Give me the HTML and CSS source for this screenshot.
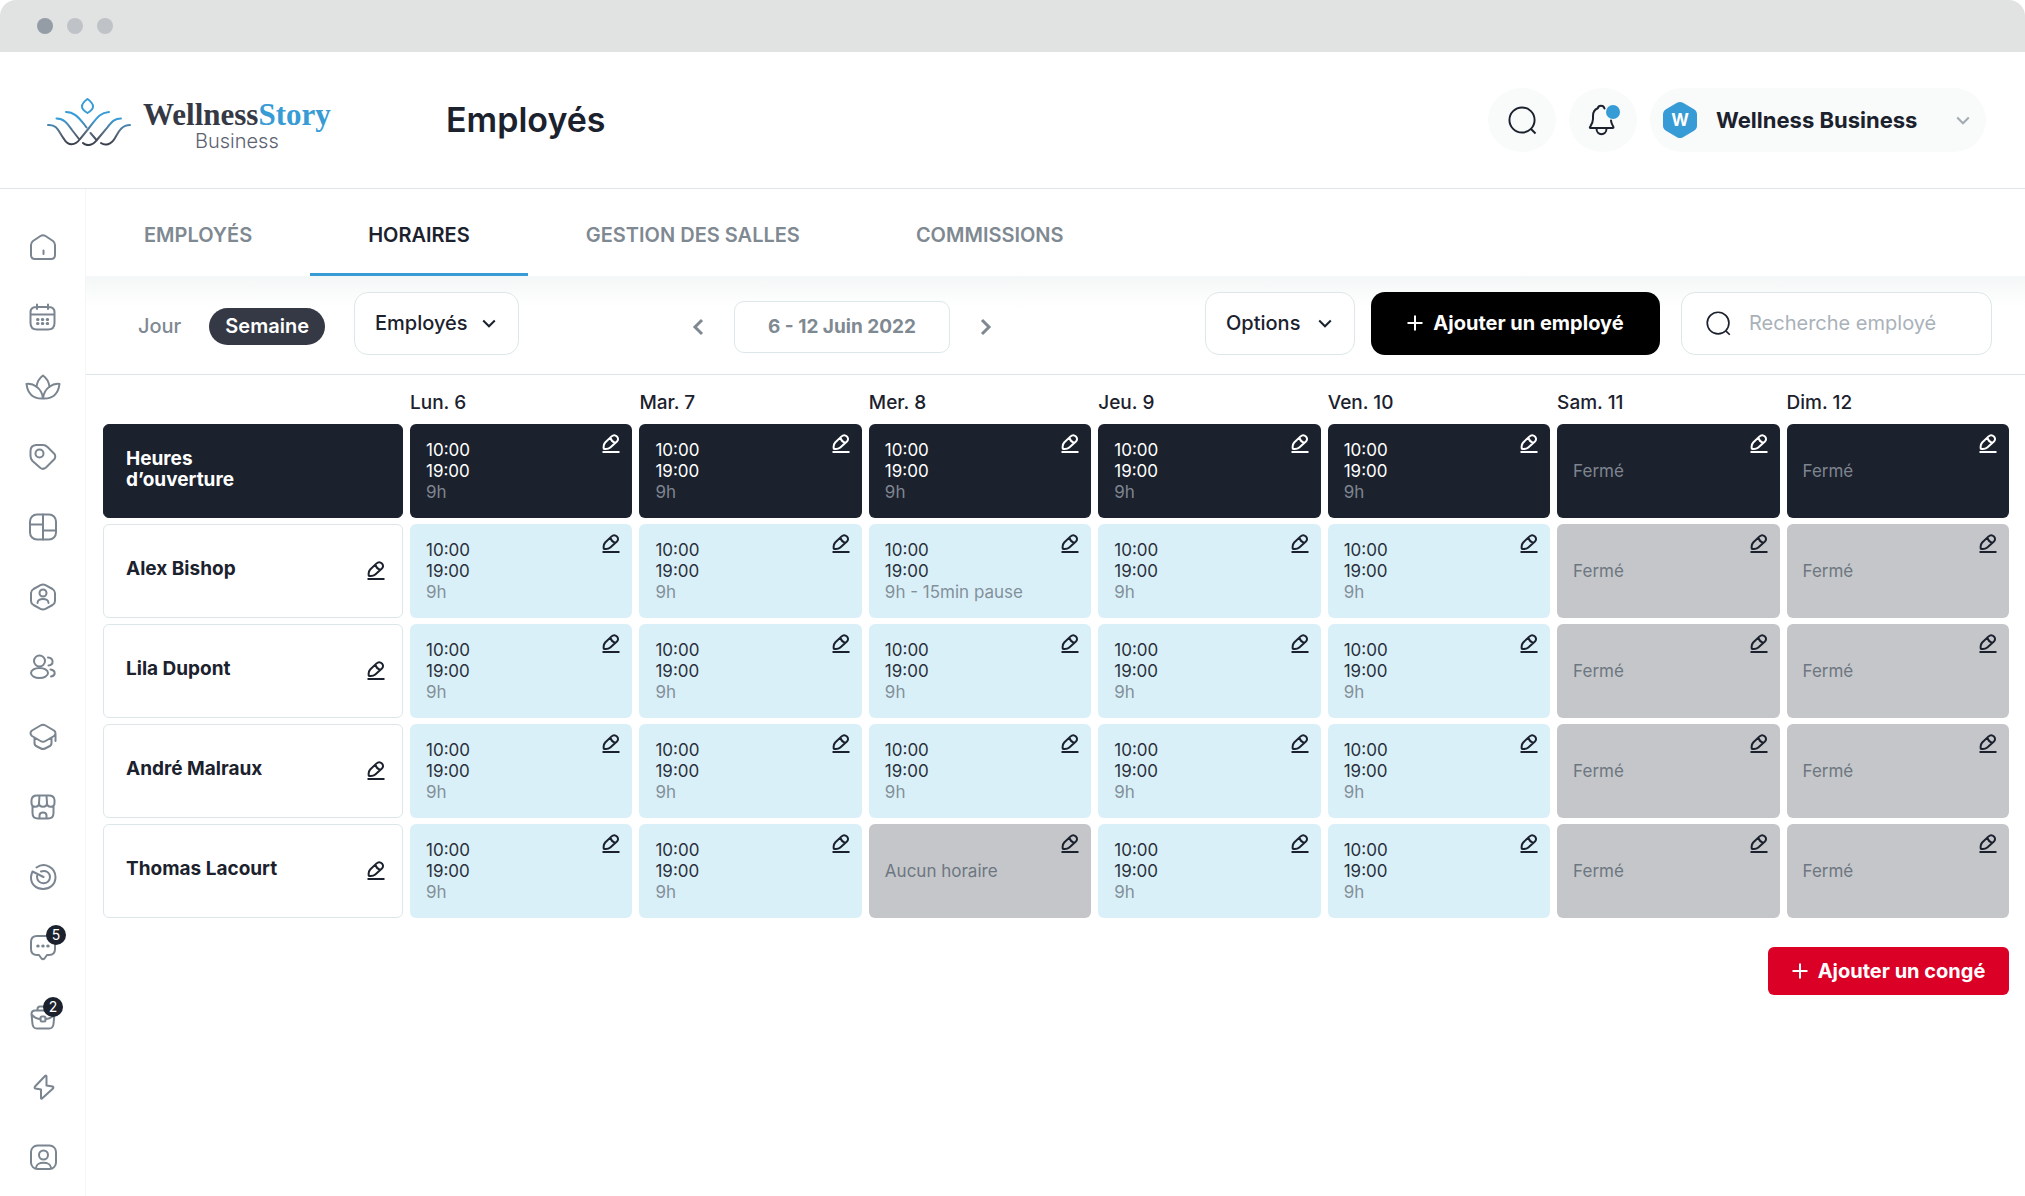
FILE: index.html
```html
<!DOCTYPE html>
<html lang="fr">
<head>
<meta charset="utf-8">
<meta name="viewport" content="width=device-width, initial-scale=1">
<title>Employés – Horaires</title>
<link rel="stylesheet" href="styles.css">
</head>
<body>
<svg class="sprite" aria-hidden="true">
  <symbol id="i-edit" viewBox="0 0 18 20"><path d="M1.800 14.800C1.200 11.500 1.800 10 3.200 8.500L9.300 2.600C11 1 13.400 1 14.900 2.400S16.400 6 14.900 7.500L8.300 13.400C6.600 14.900 4.800 15.300 1.800 14.800ZM8.700 4.200C9.200 6.300 10.600 7.900 12.800 8.600M0.500 18H17.500"/></symbol>
  <symbol id="i-search" viewBox="0 0 30 30"><circle cx="14.500" cy="14.500" r="13"/><path d="M23.500 23.500L28.500 28.500"/></symbol>
  <symbol id="i-chevron" viewBox="0 0 14 9"><path d="M1.200 1.500L7 7.300L12.800 1.500"/></symbol>
  <symbol id="i-plus" viewBox="0 0 16 16"><path d="M8 0.500V15.500M0.500 8H15.500"/></symbol>
</svg>

<div class="titlebar"><span class="dot dot-active"></span><span class="dot"></span><span class="dot"></span></div>

<header class="header">
  <a class="brand" href="#">
    <svg class="brand-mark" viewBox="0 0 84 48" aria-hidden="true">
      <defs><linearGradient id="mark" x1="0" y1="0" x2="0" y2="48" gradientUnits="userSpaceOnUse"><stop offset=".45" stop-color="#379bd5"/><stop offset=".72" stop-color="#5b6a7c"/><stop offset="1" stop-color="#353945"/></linearGradient></defs>
      <g fill="none" stroke="url(#mark)" stroke-width="2" stroke-linecap="round">
        <path d="M40.500 1C44 3.500 46 6 46 8.500S44 13 40.500 15C37 13 35 11 35 8.500S37 3.500 40.500 1Z"/>
        <path d="M1 27C11 26 12 35 17 41C21 48 28 48 33 41L42 30C50 20 52 15 62 14"/>
        <path d="M9.500 20.500C17 20.500 20 25 25 32L32 41M36 45C39 48 45 48 49 43L60 30C65 23 68 20.500 74 20.500"/>
        <path d="M19 14C27 14 31 19 37 26L39.500 29.500M43.500 35L49.500 42M54 45C58 48 64 47 68 40C72 33 75 27 83 27"/>
      </g>
    </svg>
    <span class="brand-text"><span class="brand-name">Wellness<span class="brand-accent">Story</span></span><span class="brand-sub">Business</span></span>
  </a>
  <h1 class="page-title">Employés</h1>
  <div class="header-actions">
    <button class="round-btn" type="button" aria-label="Rechercher"><svg class="ico-30"><use href="#i-search"/></svg></button>
    <button class="round-btn" type="button" aria-label="Notifications">
      <svg class="bell" viewBox="0 0 34 32" aria-hidden="true"><path d="M18.500 4.500C17.500 1 12.500 1 11.800 4.300C8.500 5.500 7 8.500 7 12V15C7 18.500 5.500 20.500 4 23C3.700 23.700 3.800 24 4.500 24H26.500C27.500 24 27.700 23.600 27.300 22.800C26 20.500 25 18.500 25 16.500M10.500 24.500C10.500 32 20.500 32 20.500 24.500"/><circle class="bell-dot" cx="27" cy="8" r="7"/></svg>
    </button>
    <div class="profile">
      <svg class="avatar" viewBox="0 0 36 38" aria-hidden="true"><path d="M15 1.800Q18 0 21 1.800L32 8.200Q35 10 35 13.500V24.500Q35 28 32 29.800L21 36.200Q18 38 15 36.200L4 29.800Q1 28 1 24.500V13.500Q1 10 4 8.200Z"/><text x="18" y="25" text-anchor="middle">W</text></svg>
      <select class="profile-select" aria-label="Compte"><option>Wellness Business</option></select>
      <svg class="chevron profile-chevron" aria-hidden="true"><use href="#i-chevron"/></svg>
    </div>
  </div>
</header>

<div class="shell">
  <nav class="sidebar" aria-label="Navigation principale">
    <a href="#" aria-label="Accueil"><svg class="nav-ico" viewBox="0 0 28 28"><path d="M2 12Q2 9.500 4 8L11.500 3Q14 1.500 16.500 3L24 8Q26 9.500 26 12V22Q26 26 22 26H6Q2 26 2 22ZM14.500 17.500V21"/></svg></a>
    <a href="#" aria-label="Calendrier"><svg class="nav-ico" viewBox="0 0 28 28"><path d="M1.500 11.500H25.500M8 1.500V6M19 1.500V6M7 4H20Q25.500 4 25.500 9.500V20Q25.500 26.500 19 26.500H8Q1.500 26.500 1.500 20V9.500Q1.500 4 7 4Z"/><path class="thick" d="M8.500 16.500H9M13.300 16.500H13.800M18.200 16.500H18.700M8.500 20.500H9M13.300 20.500H13.800M18.200 20.500H18.700"/></svg></a>
    <a href="#" aria-label="Soins"><svg class="nav-ico nav-wide" viewBox="0 0 36 26"><path d="M18 24.500C7 25 2.500 18 1.500 10C7.500 9 17 13.500 18 24.500C19 13.500 28.500 9 34.500 10C33.500 18 29 25 18 24.500M11.500 13C12 8 14.500 4 18 1.500C21.500 4 24 8 24.500 13"/></svg></a>
    <a href="#" aria-label="Offres"><svg class="nav-ico" viewBox="0 0 28 28"><path d="M1.500 8Q1.500 2.500 7 2H14Q16.500 2 18.500 4L25.500 11Q27 13.500 25.500 16L17 24.500Q14 27 11.500 25L3.500 18Q1.500 16 1.500 13Z"/><circle cx="10.500" cy="10.500" r="4"/></svg></a>
    <a href="#" aria-label="Tableau"><svg class="nav-ico" viewBox="0 0 28 28"><rect x="1" y="1.500" width="26" height="25" rx="7"/><path d="M14 1.500V26.500M1 11.500H14M14 17.500H27"/></svg></a>
    <a href="#" aria-label="Clients"><svg class="nav-ico" viewBox="0 0 28 28"><path d="M11.500 2.200Q14 1 16.500 2.200L23.500 6Q26 7.500 26 10V18Q26 20.500 23.500 22L16.500 25.800Q14 27 11.500 25.800L4.500 22Q2 20.500 2 18V10Q2 7.500 4.500 6Z"/><circle cx="14" cy="10" r="3.500"/><path d="M8.500 20C8.500 14.500 19.500 14.500 19.500 20"/></svg></a>
    <a href="#" aria-label="Équipe"><svg class="nav-ico" viewBox="0 0 28 28"><circle cx="10.500" cy="8" r="5.500"/><ellipse cx="10.500" cy="20" rx="8.500" ry="5"/><path d="M19 4.500C25 5 25 12 19.500 12.500M21.500 16.500C27 17.500 27 22.500 22 23.500"/></svg></a>
    <a href="#" aria-label="Formation"><svg class="nav-ico" viewBox="0 0 28 28"><path d="M11.500 2.500Q14 1 16.500 2.500L25 7.500Q28 10 25 13L16.500 18Q14 19.500 11.500 18L3 13Q0 10 3 7.500ZM5.500 15V20Q5.500 22.500 8 23.500L12 25.500Q14 26.500 16 25.500L20 23.500Q22.500 22.500 22.500 20V15M26.500 11V18"/></svg></a>
    <a href="#" aria-label="Boutique"><svg class="nav-ico" viewBox="0 0 28 28"><path d="M8 2.500H20Q25 2.500 25.500 7V10C25.500 15 18 15 18 10C18 15 10 15 10 10C10 15 2.500 15 2.500 10V7Q3 2.500 8 2.500ZM10.500 2.500L10 10M17.500 2.500L18 10M3.500 13.500V20Q3.500 25.500 9 25.500H19Q24.500 25.500 24.500 20V13.500M10.500 25.500V22.500Q10.500 19.500 14 19.500T17.500 22.500V25.500"/></svg></a>
    <a href="#" aria-label="Objectifs"><svg class="nav-ico" viewBox="0 0 28 28"><path d="M7.500 4.500C16-1.500 26.500 5 26.500 14C26.500 30 1.500 30 2 14Q2.300 11 3.500 8.500L14.500 14M12 8.500C17 6.500 21 10 21 14C21 22.500 7.500 22.500 8 13"/></svg></a>
    <a href="#" aria-label="Messages, 5 nouveaux"><svg class="nav-ico" viewBox="0 0 28 28"><path d="M8 3H20Q26 3 26 9V16Q26 22 20 22H18L15.500 25.500Q14 27 12.500 25.500L10 22H8Q2 22 2 16V9Q2 3 8 3Z"/><path class="thick" d="M8.700 13H9.200M13.700 13H14.200M18.700 13H19.200"/></svg><span class="badge">5</span></a>
    <a href="#" aria-label="Emploi, 2 nouveaux"><svg class="nav-ico" viewBox="0 0 28 28"><path d="M6 7.500H22Q25.500 7.500 25.500 11L24.500 21Q24 25.500 20 25.500H8Q4 25.500 3.500 21L2.500 11Q2.500 7.500 6 7.500ZM8.500 7.500V6Q8.500 3.500 11 3.500H17Q19.500 3.500 19.500 6V7.500M2.500 11.500Q6.500 16 11.500 16M25.500 11.500Q21.500 16 16.500 16"/><rect x="11.500" y="13.500" width="5" height="5" rx="1.500"/></svg><span class="badge badge-near">2</span></a>
    <a href="#" aria-label="Automatisations"><svg class="nav-ico" viewBox="0 0 28 28"><path d="M17.500 3.500V12.500L23.500 13.500Q25 14 24 15.500L13 25.500Q12 26 12 25V16.500L6.500 15.500Q5 15 6 13.500L16 3Q17.500 2 17.500 3.500Z"/></svg></a>
    <a href="#" aria-label="Profil"><svg class="nav-ico" viewBox="0 0 28 28"><rect x="2" y="2.500" width="25" height="23.500" rx="6.500"/><circle cx="14.500" cy="12" r="4.500"/><path d="M7 25C7 18 22 18 22 25"/></svg></a>
  </nav>

  <main class="main">
    <nav class="tabs" aria-label="Sections">
      <a class="tab" href="#">EMPLOYÉS</a>
      <a class="tab tab-active" href="#" aria-current="page">HORAIRES</a>
      <a class="tab" href="#">GESTION DES SALLES</a>
      <a class="tab" href="#">COMMISSIONS</a>
    </nav>

    <div class="toolbar">
      <div class="tool-group">
        <div class="view-switch"><button class="view" type="button">Jour</button><button class="view view-active" type="button">Semaine</button></div>
        <div class="dropdown dropdown-wide"><select aria-label="Afficher"><option>Employés</option></select><svg class="chevron" aria-hidden="true"><use href="#i-chevron"/></svg></div>
      </div>
      <div class="period">
        <button class="arrow" type="button" aria-label="Semaine précédente"><svg viewBox="0 0 12 18"><path d="M10 2L3 9L10 16"/></svg></button>
        <button class="period-value" type="button">6 - 12 Juin 2022</button>
        <button class="arrow" type="button" aria-label="Semaine suivante"><svg viewBox="0 0 12 18"><path d="M2 2L9 9L2 16"/></svg></button>
      </div>
      <div class="tool-actions">
        <div class="dropdown"><select aria-label="Options"><option>Options</option></select><svg class="chevron" aria-hidden="true"><use href="#i-chevron"/></svg></div>
        <button class="btn btn-dark" type="button"><svg class="plus" aria-hidden="true"><use href="#i-plus"/></svg>Ajouter un employé</button>
        <label class="search"><svg class="ico-24" aria-hidden="true"><use href="#i-search"/></svg><input type="text" placeholder="Recherche employé" aria-label="Recherche employé"></label>
      </div>
    </div>

    <section class="schedule">
      <table class="grid">
        <colgroup><col class="col-name"><col span="7"></colgroup>
        <thead><tr><td></td><th scope="col">Lun. 6</th><th scope="col">Mar. 7</th><th scope="col">Mer. 8</th><th scope="col">Jeu. 9</th><th scope="col">Ven. 10</th><th scope="col">Sam. 11</th><th scope="col">Dim. 12</th></tr></thead>
        <tbody id="rows"></tbody>
      </table>
      <button class="btn btn-red" type="button"><svg class="plus" aria-hidden="true"><use href="#i-plus"/></svg>Ajouter un congé</button>
    </section>
  </main>
</div>
<script src="schedule.js"></script>
</body>
</html>
```
FILE: styles.css
```css
* { box-sizing: border-box; }

:root {
  --ink: #1b212d;
  --muted: #7f8992;
  --line: #dde7e9;
  --blue: #379bd5;
  --open: #daf0f8;
  --closed: #c5c6ca;
}

body {
  margin: 0;
  background: #fff;
  color: var(--ink);
  font: 18px/21px Inter, "Liberation Sans", sans-serif;
}

button, select, input { font: inherit; color: inherit; }
button { border: 0; padding: 0; background: none; cursor: pointer; }
a { color: inherit; text-decoration: none; }
svg { display: block; fill: none; stroke: currentColor; flex: none; }
.sprite { display: none; }

.titlebar {
  display: flex;
  align-items: center;
  gap: 14px;
  height: 52px;
  padding-left: 37px;
  background: #e1e3e3;
  border-radius: 16px 16px 0 0;
}
.dot { width: 16px; height: 16px; border-radius: 50%; background: #bfc2c7; }
.dot-active { background: #949ca6; }

.header {
  display: flex;
  align-items: center;
  height: 137px;
  padding: 0 39px 0 47px;
  border-bottom: 1px solid var(--line);
}
.brand { display: flex; align-items: center; gap: 12px; width: 399px; padding-top: 4px; }
.brand-mark { width: 84px; height: 48px; }
.brand-text { display: flex; flex-direction: column; align-items: center; padding-top: 6px; }
.brand-name { font: bold 31px/32px "Liberation Serif", serif; color: #353945; }
.brand-accent { color: var(--blue); }
.brand-sub { font-size: 20px; line-height: 20px; font-weight: 300; color: #5b6270; }
.page-title { margin: 0; font-size: 34px; line-height: 40px; font-weight: 600; }
.header-actions { display: flex; gap: 13px; margin-left: auto; }
.round-btn {
  display: grid;
  place-items: center;
  width: 68px;
  height: 64px;
  border-radius: 50%;
  background: #f9fafa;
}
.ico-30 { width: 29px; height: 29px; stroke-width: 2; }
.ico-24 { width: 25px; height: 25px; stroke-width: 2; }
.bell { width: 34px; height: 32px; stroke-width: 2; stroke-linecap: round; }
.bell-dot { fill: var(--blue); stroke: none; }
.profile { display: grid; grid-template-columns: 36px 1fr; align-items: center; gap: 18px; height: 64px; width: 336px; padding: 0 16px 0 12px; border-radius: 32px; background: #f9fafa; }
.avatar { width: 36px; height: 38px; stroke: none; fill: var(--blue); }
.avatar text { fill: #fff; font: 700 17px Inter, sans-serif; }
.profile-select { grid-area: 1 / 2; height: 64px; padding: 0; border: 0; appearance: none; background: none; font-size: 22px; line-height: 28px; font-weight: 700; }
.chevron { width: 14px; height: 9px; stroke-width: 2; pointer-events: none; }
.profile-chevron { grid-area: 1 / 2; justify-self: end; color: #a3abb2; }

.shell { display: flex; }
.sidebar {
  display: flex;
  flex-direction: column;
  flex: none;
  gap: 42px;
  width: 86px;
  padding: 44px 0 25px;
  border-right: 1px solid #f4f7f7;
  color: #7a8590;
}
.sidebar a { display: grid; place-items: center; position: relative; height: 28px; }
.nav-ico { width: 28px; height: 28px; stroke-width: 2; stroke-linecap: round; stroke-linejoin: round; }
.nav-wide { width: 36px; height: 26px; }
.thick { stroke-width: 3; }
.badge {
  position: absolute;
  top: -8px;
  left: 46px;
  width: 20px;
  height: 20px;
  border-radius: 50%;
  background: var(--ink);
  color: #fff;
  font-size: 14px;
  line-height: 20px;
  text-align: center;
}
.badge-near { top: -6px; left: 43px; }

.main { flex: 1; min-width: 0; }
.tabs { display: flex; height: 87px; }
.tab {
  display: flex;
  align-items: center;
  padding: 9px 58px 0;
  border-bottom: 3px solid transparent;
  color: var(--muted);
  font-size: 20px;
  font-weight: 600;
}
.tab-active { color: var(--ink); border-color: var(--blue); }

.toolbar {
  display: flex;
  align-items: center;
  justify-content: space-between;
  height: 99px;
  padding: 0 33px 4px 52px;
  border-bottom: 1px solid var(--line);
  background: linear-gradient(#f4f7f7, #fff 32px);
  font-size: 20px;
}
.tool-group, .tool-actions, .view-switch, .period { display: flex; align-items: center; }
.tool-group { gap: 29px; }
.view-switch { gap: 28px; padding-top: 7px; }
.view { font-weight: 500; color: var(--muted); }
.view-active { height: 37px; padding: 0 16px; border-radius: 19px; background: #353945; color: #fff; font-weight: 600; }
.dropdown { display: grid; align-items: center; width: 150px; font-weight: 500; }
.dropdown-wide { width: 165px; }
.dropdown select { grid-area: 1 / 1; height: 63px; padding: 0 20px; border: 1px solid var(--line); border-radius: 14px; appearance: none; background: #fff; }
.dropdown .chevron { grid-area: 1 / 1; justify-self: end; margin-right: 23px; }
.period { gap: 30px; padding: 7px 40px 0 0; color: var(--muted); }
.arrow svg { width: 12px; height: 18px; stroke-width: 3; }
.period-value { width: 216px; height: 52px; border: 1px solid var(--line); border-radius: 10px; background: #fff; font-size: 19px; font-weight: 700; }
.tool-actions { gap: 16px; }
.btn { display: flex; align-items: center; justify-content: center; gap: 10px; color: #fff; font-size: 20px; font-weight: 700; }
.plus { width: 16px; height: 16px; stroke-width: 2; }
.btn-dark { width: 289px; height: 63px; border-radius: 14px; background: #000; }
.search { display: flex; align-items: center; gap: 18px; width: 311px; height: 63px; margin-left: 5px; padding: 0 24px; border: 1px solid var(--line); border-radius: 14px; background: #fff; }
.search input { width: 100%; min-width: 0; padding: 0; border: 0; outline: 0; background: none; }
.search input::placeholder { color: #a9b2b9; opacity: 1; }

.schedule { display: flex; flex-direction: column; padding: 5px 9px 32px 10px; }
.grid { width: 100%; table-layout: fixed; border-spacing: 7px 6px; }
.col-name { width: 300px; }
.grid th, .grid td { padding: 0; text-align: left; }
.grid thead th { height: 32px; font-size: 19px; font-weight: 500; }
.cell { display: flex; justify-content: space-between; height: 94px; border-radius: 6px; }
.person { align-items: center; padding: 0 17px 0 22px; border: 1px solid var(--line); font-size: 19px; font-weight: 700; }
.person-name { padding-bottom: 5px; }
.slot { padding: 10px 12px 0 16px; background: var(--open); font-size: 17px; color: #2a303c; }
.hours { margin: 6px 0 0; font-weight: 400; }
.note { color: #83909a; }
.status { margin: 27px 0 0; color: #6d7780; }
.slot-closed { background: var(--closed); }
.opening .cell { background: var(--ink); border-color: var(--ink); color: #fff; }
.opening .note, .opening .status { color: #7f858f; }
.edit { height: 20px; color: var(--ink); }
.edit svg { width: 18px; height: 20px; stroke-width: 2; stroke-linejoin: round; }
.opening .edit { color: #fff; }
.btn-red { align-self: flex-end; width: 241px; height: 48px; margin: 23px 7px 0 0; border-radius: 6px; background: #db0026; }
```
FILE: schedule.js
```js
const OPEN = ["10:00", "19:00", "9h"];
const PAUSE = ["10:00", "19:00", "9h - 15min pause"];
const CLOSED = "Fermé";

const rows = [
  { name: "Heures<br>d’ouverture", opening: true, days: [OPEN, OPEN, OPEN, OPEN, OPEN, CLOSED, CLOSED] },
  { name: "Alex Bishop", days: [OPEN, OPEN, PAUSE, OPEN, OPEN, CLOSED, CLOSED] },
  { name: "Lila Dupont", days: [OPEN, OPEN, OPEN, OPEN, OPEN, CLOSED, CLOSED] },
  { name: "André Malraux", days: [OPEN, OPEN, OPEN, OPEN, OPEN, CLOSED, CLOSED] },
  { name: "Thomas Lacourt", days: [OPEN, OPEN, "Aucun horaire", OPEN, OPEN, CLOSED, CLOSED] },
];

const edit = '<button class="edit" type="button" aria-label="Modifier"><svg><use href="#i-edit"/></svg></button>';

const slot = (day) => Array.isArray(day)
  ? `<td><div class="cell slot"><p class="hours">${day[0]}<br>${day[1]}<br><span class="note">${day[2]}</span></p>${edit}</div></td>`
  : `<td><div class="cell slot slot-closed"><p class="status">${day}</p>${edit}</div></td>`;

document.getElementById("rows").innerHTML = rows.map((row) =>
  `<tr class="${row.opening ? "opening" : "employee"}"><th scope="row"><div class="cell person"><span class="person-name">${row.name}</span>${row.opening ? "" : edit}</div></th>${row.days.map(slot).join("")}</tr>`
).join("");
```
